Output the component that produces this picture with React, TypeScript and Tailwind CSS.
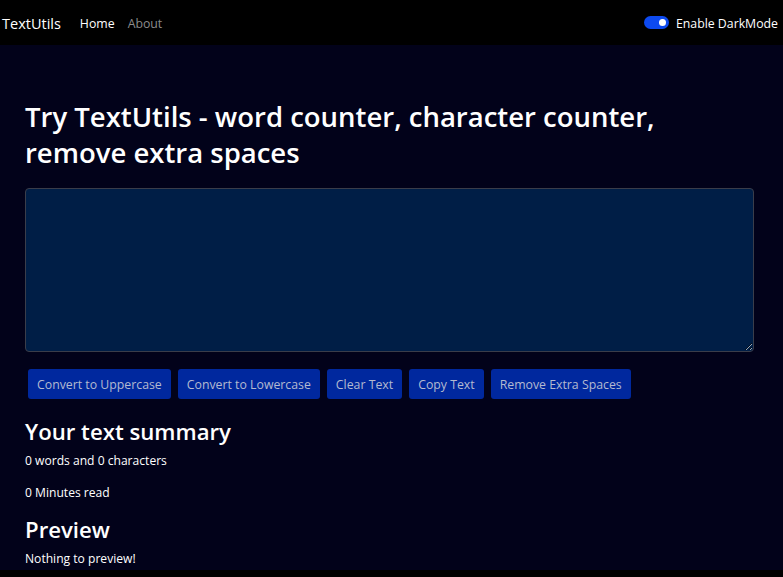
import React from "react";

const font = { fontFamily: '"Open Sans", "Noto Sans", sans-serif' };

export default function App() {
  const buttons = [
    "Convert to Uppercase",
    "Convert to Lowercase",
    "Clear Text",
    "Copy Text",
    "Remove Extra Spaces",
  ];
  return (
    <div className="min-h-screen bg-black" style={font}>
      <nav className="flex h-[45px] items-center justify-between bg-black pr-[5px]">
        <div className="flex items-center pt-[3px]">
          <span className="ml-[2px] text-[14.5px] text-white">TextUtils</span>
          <a className="ml-[19px] text-[12.3px] text-white">Home</a>
          <a className="ml-[13px] text-[12.3px] text-[#8c8c8c]">About</a>
        </div>
        <div className="flex items-center">
          <span className="relative inline-block h-[13px] w-[25px] rounded-full bg-[#0d4af0]">
            <span className="absolute right-[3px] top-[3px] h-[7px] w-[7px] rounded-full bg-white" />
          </span>
          <span className="ml-[7px] pt-[3px] text-[12.3px] text-white">Enable DarkMode</span>
        </div>
      </nav>
      <div className="bg-[#02021a] pb-[2px] pl-[25px] pr-[29px] pt-[54px] text-white">
        <h1 className="mb-[17px] text-[27.5px] font-semibold leading-[36px]">
          Try TextUtils - word counter, character counter, remove extra spaces
        </h1>
        <textarea className="block h-[164px] w-full resize-y rounded-[4px] border border-[#3a3d4a] bg-[#001e46] text-white outline-none" />
        <div className="mt-[17px] flex gap-[7px] pl-[3px]">
          {buttons.map((b) => (
            <button
              key={b}
              className="h-[30px] rounded-[3px] bg-[#00289e] px-[9px] pt-[2px] text-[12.3px] text-[#b4bad0]"
            >
              {b}
            </button>
          ))}
        </div>
        <h2 className="mt-[19px] text-[22.2px] font-semibold leading-[28px]">Your text summary</h2>
        <p className="mt-[5px] text-[12.1px] leading-[19px]">0 words and 0 characters</p>
        <p className="mt-[13px] text-[12.1px] leading-[19px]">0 Minutes read</p>
        <h2 className="mt-[14px] text-[22.2px] font-semibold leading-[28px]">Preview</h2>
        <p className="mt-[5px] text-[12.1px] leading-[19px]">Nothing to preview!</p>
      </div>
    </div>
  );
}
